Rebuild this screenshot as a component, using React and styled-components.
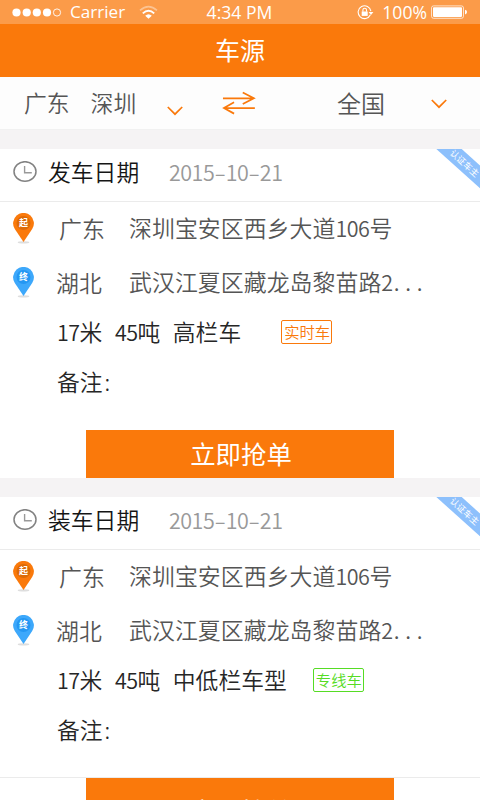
import React from 'react';
import styled, { createGlobalStyle } from 'styled-components';

const COLORS = {
  primary: '#fa790b',
  statusBar: '#fb9b49',
  blue: '#3da8fb',
  ribbon: '#8dc0fc',
  green: '#56dc24',
  page: '#f5f3f4',
  line: '#ebebeb',
};

const GlobalStyle = createGlobalStyle`
  * {
    box-sizing: border-box;
  }
  body {
    margin: 0;
    background: ${COLORS.page};
    font-family: 'Noto Sans CJK SC', sans-serif;
    font-weight: 350;
    overflow: hidden;
  }
`;

// --- 1. Page and status bar ---

const Page = styled.div`
  width: 480px;
  height: 800px;
  overflow: hidden;
  white-space: nowrap;
`;

const StatusBar = styled.div`
  display: grid;
  grid-template-columns: 1fr auto 1fr;
  align-items: center;
  height: 24px;
  padding: 0 13px 0 12px;
  background: ${COLORS.statusBar};
  color: #fff;
  font-family: 'Open Sans', 'Noto Sans', sans-serif;
  font-weight: 400;
  font-size: 17.6px;
  line-height: 24px;
`;

const StatusGroup = styled.div`
  display: flex;
  align-items: center;
  justify-content: ${(props) => (props.$end ? 'flex-end' : 'flex-start')};
`;

const Carrier = styled.span`
  margin: 0 14px 0 8px;
  font-size: 17.1px;
`;

const Percent = styled.span`
  margin: 0 4px 0 8px;
`;

// --- 2. Title and filters ---

const TitleBar = styled.header`
  display: flex;
  align-items: center;
  justify-content: center;
  height: 53px;
  padding-bottom: 3px;
  background: ${COLORS.primary};
  color: #fff;
  font-size: 25px;
  line-height: 50px;
  font-weight: 400;
`;

const FilterBar = styled.div`
  display: flex;
  align-items: center;
  height: 53px;
  padding: 0 33px 0 24px;
  background: #fdfdfd;
  border-bottom: 1px solid #f1f1f1;
  color: #555;
  font-size: 22.8px;
`;

const Province = styled.span`
  padding-bottom: 1px;
  line-height: 46px;
`;

const City = styled(Province)`
  margin-left: 21px;
`;

const Region = styled(Province)`
  margin: 0 46px 0 81px;
  font-size: 24px;
`;

const Chevron = styled.svg`
  flex: none;
  margin: ${(props) => (props.$low ? '15px 39px 0 31px' : '1px 0 0')};
`;

// --- 3. Cards ---

const Card = styled.section`
  position: relative;
  margin-top: 19px;
  background: #fff;
  overflow: hidden;
`;

const DateRow = styled.div`
  display: flex;
  align-items: center;
  height: 53px;
  padding-left: 13px;
  padding-bottom: 7px;
  border-bottom: 1px solid ${COLORS.line};
  font-size: 22.8px;
  line-height: 46px;
`;

const DateLabel = styled.span`
  width: 121px;
  margin-left: 11px;
  color: #151515;
`;

const Numbers = styled.span`
  font-size: 21.5px;
  letter-spacing: -0.5px;
  color: ${(props) => props.$color || 'inherit'};
`;

const Dash = styled.span`
  display: inline-block;
  width: 11.5px;
  text-align: center;
  transform: scaleX(1.6);
`;

const Ribbon = styled.div`
  position: absolute;
  top: 4.5px;
  right: -39px;
  width: 110px;
  height: 17px;
  padding-left: 2px;
  background: ${COLORS.ribbon};
  color: #fff;
  font-size: 8.8px;
  font-weight: 400;
  line-height: 17px;
  text-align: center;
  transform: rotate(42deg);
`;

const AddressRow = styled.div`
  display: flex;
  align-items: center;
  height: ${(props) => props.$height}px;
  padding-left: 12px;
  color: #555;
  font-size: 22.9px;
`;

const Pin = styled.div`
  position: relative;
  display: flex;
  flex: none;
  width: 23px;
  height: 32px;
  margin-top: 2px;
  color: #fff;
`;

const PinText = styled.span`
  position: absolute;
  top: 3px;
  left: 0;
  width: 23px;
  text-align: center;
  font-size: 9px;
  line-height: 13px;
  font-weight: 700;
`;

const From = styled(Province)`
  width: 70px;
  margin-left: 24px;
`;

const To = styled(Province)`
  width: 73px;
  margin-left: 21px;
`;

const Street = styled(Province)`
  letter-spacing: 0.05px;
`;

const Dots = styled.span`
  margin-left: 1px;
  letter-spacing: 5.8px;
`;

const InfoRow = styled.div`
  display: flex;
  align-items: center;
  height: ${(props) => props.$height}px;
  padding-left: 57px;
  padding-bottom: ${(props) => props.$lift || 1}px;
  color: #262626;
  font-size: 22.8px;
  line-height: 42px;
`;

const Spec = styled.span`
  margin-right: 12.5px;
`;

const Tag = styled.span`
  height: 24px;
  width: 51px;
  margin-left: ${(props) => props.$gap}px;
  padding-left: 1px;
  border: 1px solid ${(props) => props.$color};
  border-radius: 2px;
  color: ${(props) => props.$color};
  font-size: 15.3px;
  line-height: 21px;
  text-align: center;
`;

const Colon = styled.span`
  margin-left: 2px;
  font-weight: 300;
`;

const Footer = styled.div`
  margin-top: 18px;
  border-top: 1px solid ${(props) => (props.$divided ? COLORS.line : 'transparent')};
`;

const GrabButton = styled.button`
  display: block;
  width: 308px;
  height: ${(props) => props.$height}px;
  margin: 0 0 0 86px;
  padding: 0 0 2px 2px;
  border: none;
  background: ${COLORS.primary};
  color: #fff;
  font-family: inherit;
  font-size: 25.4px;
  font-weight: 400;
  line-height: 45px;
`;

// --- 4. Icons ---

const SignalIcon = () => (
  <svg width="50" height="10" viewBox="0 0 50 10" fill="#fff">
    {[4.5, 14.7, 24.8, 35].map((x) => (
      <circle key={x} cx={x} cy="5.5" r="4.1" />
    ))}
    <circle cx="45" cy="5.5" r="3.6" fill="none" stroke="#fff" strokeWidth="0.9" />
  </svg>
);

const WifiIcon = () => (
  <svg width="19" height="14" viewBox="0 0 19 14" fill="none" stroke="#fff">
    <path d="M1 5.4 Q9.5 -2.2 18 5.4" strokeWidth="1.6" opacity="0.4" />
    <path d="M3.8 8.4 Q9.5 3 15.2 8.4" strokeWidth="1.9" />
    <path d="M6.2 10.8 Q9.5 7.6 12.8 10.8 L9.5 13.8Z" fill="#fff" stroke="none" />
  </svg>
);

const LockIcon = () => (
  <svg width="17" height="15" viewBox="0 0 17 15" fill="none" stroke="#fff">
    <path d="M13.4 9.8 A6.4 6.4 0 1 1 13.9 6.2" strokeWidth="1.1" />
    <path d="M11.6 7 H16.4 L14 10Z" fill="#fff" stroke="none" />
    <rect x="4.7" y="6.5" width="6" height="4.4" fill="#fff" stroke="none" />
    <path d="M5.9 6.8 V5 A1.8 1.8 0 0 1 9.5 5 V6.8" strokeWidth="1.1" />
  </svg>
);

const BatteryIcon = () => (
  <svg width="36" height="14" viewBox="0 0 36 14">
    <rect x="0.5" y="0.9" width="32" height="12.4" rx="2" fill="none" stroke="#fff" strokeOpacity="0.7" />
    <rect x="2" y="2.3" width="29" height="9.6" rx="0.8" fill="#fff" />
    <path d="M34 4.8 Q36 5.2 36 7 Q36 8.8 34 9.4Z" fill="#fff" />
  </svg>
);

const ChevronIcon = ({ low }) => (
  <Chevron $low={low} width="16" height="10" viewBox="0 0 16 10" fill="none" stroke={COLORS.primary} strokeWidth="1.7">
    <path d="M0.8 1 L8 8.2 L15.2 1" />
  </Chevron>
);

const SwapIcon = () => (
  <svg width="35" height="24" viewBox="0 0 35 24" fill="none" stroke={COLORS.primary} strokeWidth="1.8">
    <path d="M1 7.1 H33 M21.5 1.2 L33 7.1 L21.5 13" />
    <path d="M34 17.2 H2 M12.5 11.2 L2 17.2 L12.5 23" />
  </svg>
);

const ClockIcon = () => (
  <svg width="24" height="22" viewBox="0 0 24 22" fill="none" stroke="#828282">
    <ellipse cx="12" cy="10.5" rx="11" ry="9.8" strokeWidth="1.5" />
    <path d="M11.6 5 V11.7 H18.8" strokeWidth="1.4" stroke="#999" />
  </svg>
);

const PinIcon = ({ color, inner, label }) => (
  <Pin>
    <svg width="23" height="32" viewBox="0 0 23 32">
      <ellipse cx="11.5" cy="29.4" rx="5.8" ry="1.1" fill="#dedede" />
      <path d="M11.5 29 L2.8 16 A10.4 10.4 0 1 1 20.2 16Z" fill={color} />
      <circle cx="11.5" cy="10" r="7" fill={inner} />
    </svg>
    <PinText>{label}</PinText>
  </Pin>
);

// --- 5. Truck card ---

const TruckCard = ({ label, type, tag, tagColor, tagGap, divided, buttonHeight }) => (
  <Card>
    <DateRow>
      <ClockIcon />
      <DateLabel>{label}</DateLabel>
      <Numbers $color="#999">2015<Dash>-</Dash>10<Dash>-</Dash>21</Numbers>
    </DateRow>
    <Ribbon>认证车主</Ribbon>
    <AddressRow $height={52}>
      <PinIcon color={COLORS.primary} inner="#dc6a06" label="起" />
      <From>广东</From>
      <Street>深圳宝安区西乡大道<Numbers>106</Numbers>号</Street>
    </AddressRow>
    <AddressRow $height={56}>
      <PinIcon color={COLORS.blue} inner="#2497f3" label="终" />
      <To>湖北</To>
      <Street>武汉江夏区藏龙岛黎苗路<Numbers>2<Dots>...</Dots></Numbers></Street>
    </AddressRow>
    <InfoRow $height={44}>
      <Spec><Numbers>17</Numbers>米</Spec>
      <Spec><Numbers>45</Numbers>吨</Spec>
      <span>{type}</span>
      <Tag $color={tagColor} $gap={tagGap}>{tag}</Tag>
    </InfoRow>
    <InfoRow $height={57} $lift={2}>备注<Colon>:</Colon></InfoRow>
    <Footer $divided={divided}>
      <GrabButton $height={buttonHeight}>立即抢单</GrabButton>
    </Footer>
  </Card>
);

const App = () => {
  return (
    <>
      <GlobalStyle />
      <Page>
        <StatusBar>
          <StatusGroup>
            <SignalIcon />
            <Carrier>Carrier</Carrier>
            <WifiIcon />
          </StatusGroup>
          <span>4:34 PM</span>
          <StatusGroup $end>
            <LockIcon />
            <Percent>100%</Percent>
            <BatteryIcon />
          </StatusGroup>
        </StatusBar>

        <TitleBar>车源</TitleBar>

        <FilterBar>
          <Province>广东</Province>
          <City>深圳</City>
          <ChevronIcon low />
          <SwapIcon />
          <Region>全国</Region>
          <ChevronIcon />
        </FilterBar>

        <TruckCard
          label="发车日期"
          type="高栏车"
          tag="实时车"
          tagColor={COLORS.primary}
          tagGap={40}
          buttonHeight={48}
        />
        <TruckCard
          label="装车日期"
          type="中低栏车型"
          tag="专线车"
          tagColor={COLORS.green}
          tagGap={26}
          divided
          buttonHeight={66}
        />
      </Page>
    </>
  );
};

export default App;
